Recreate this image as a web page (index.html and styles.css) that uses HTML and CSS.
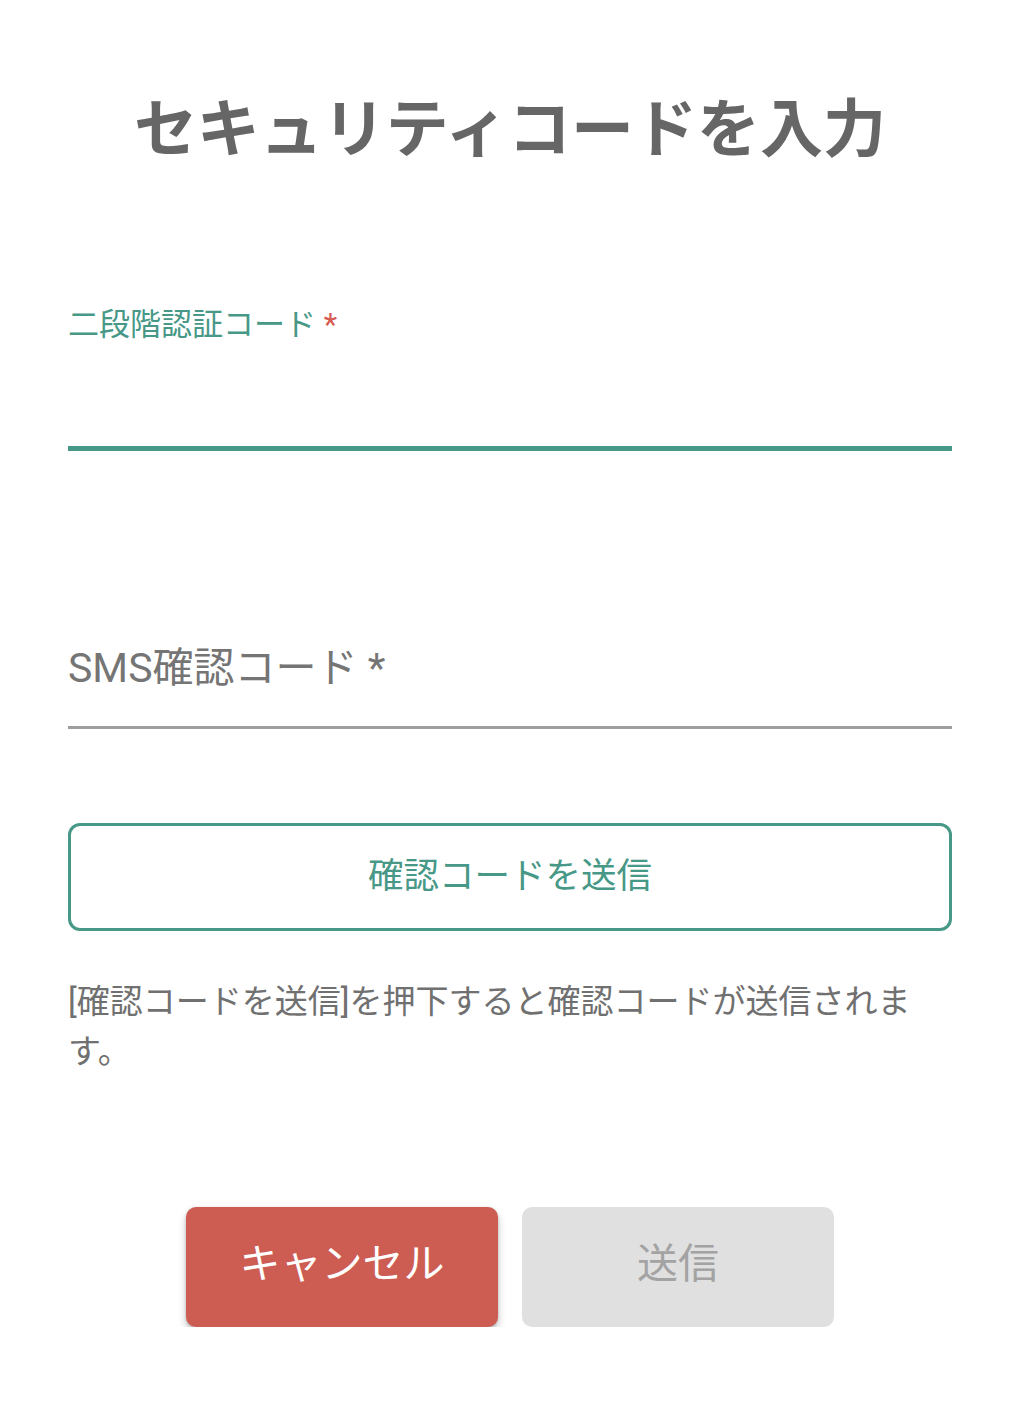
FILE: index.html
```html
<!DOCTYPE html>
<html lang="ja">
<head>
<meta charset="utf-8">
<title>セキュリティコードを入力</title>
<link rel="stylesheet" href="styles.css">
</head>
<body>
<main class="page">
  <h1 class="title">セキュリティコードを入力</h1>

  <div class="field field-focused">
    <div class="field-label">二段階認証コード<span class="req"> *</span></div>
    <div class="field-input"></div>
  </div>

  <div class="field field-idle">
    <div class="field-label">SMS確認コード *</div>
    <div class="field-input"></div>
  </div>

  <button class="outline-btn" type="button">確認コードを送信</button>

  <p class="helper">[確認コードを送信]を押下すると確認コードが送信されます。</p>

  <div class="actions">
    <button class="btn btn-cancel" type="button">キャンセル</button>
    <button class="btn btn-send" type="button" disabled>送信</button>
  </div>
</main>
</body>
</html>
```

FILE: styles.css
```css
* { box-sizing: border-box; }

html, body {
  margin: 0;
  padding: 0;
  background: #ffffff;
}

body {
  font-family: Roboto, "Noto Sans CJK JP", sans-serif;
  color: #707070;
}

.page {
  padding: 90px 64px 0 68px;
}

.title {
  margin: 0;
  height: 80px;
  line-height: 80px;
  font-size: 63px;
  font-weight: 700;
  color: #666666;
  text-align: center;
  white-space: nowrap;
}

.field-focused {
  margin-top: 135px;
}

.field-focused .field-label {
  font-size: 31px;
  line-height: 40px;
  color: #479886;
}

.req {
  color: #d55a4f;
}

.field-focused .field-input {
  height: 106px;
  border-bottom: 5px solid #479886;
}

.field-idle {
  margin-top: 192px;
}

.field-idle .field-label {
  font-size: 41px;
  line-height: 50px;
  color: #757575;
}

.field-idle .field-input {
  height: 36px;
  border-bottom: 3px solid #9e9e9e;
}

.outline-btn {
  display: block;
  width: 100%;
  height: 108px;
  margin-top: 94px;
  border: 3px solid #479886;
  border-radius: 12px;
  background: #ffffff;
  color: #479886;
  font-family: inherit;
  font-size: 35.5px;
  padding: 0 0 10px 0;
}

.helper {
  margin: 46px 0 0 0;
  padding-right: 24px;
  font-size: 33px;
  line-height: 50px;
  color: #707070;
}

.actions {
  margin-top: 130px;
  display: flex;
  justify-content: center;
  gap: 24px;
}

.btn {
  width: 312px;
  height: 120px;
  border: none;
  border-radius: 10px;
  font-family: inherit;
  font-size: 41px;
  padding: 0 0 14px 0;
}

.btn-cancel {
  background: #cd5c53;
  color: #ffffff;
  font-weight: 400;
  box-shadow: 0 5px 8px rgba(0, 0, 0, 0.22), 0 1px 3px rgba(0, 0, 0, 0.18);
}

.btn-send {
  background: #e0e0e0;
  color: #a3a3a3;
  font-weight: 400;
}
```
